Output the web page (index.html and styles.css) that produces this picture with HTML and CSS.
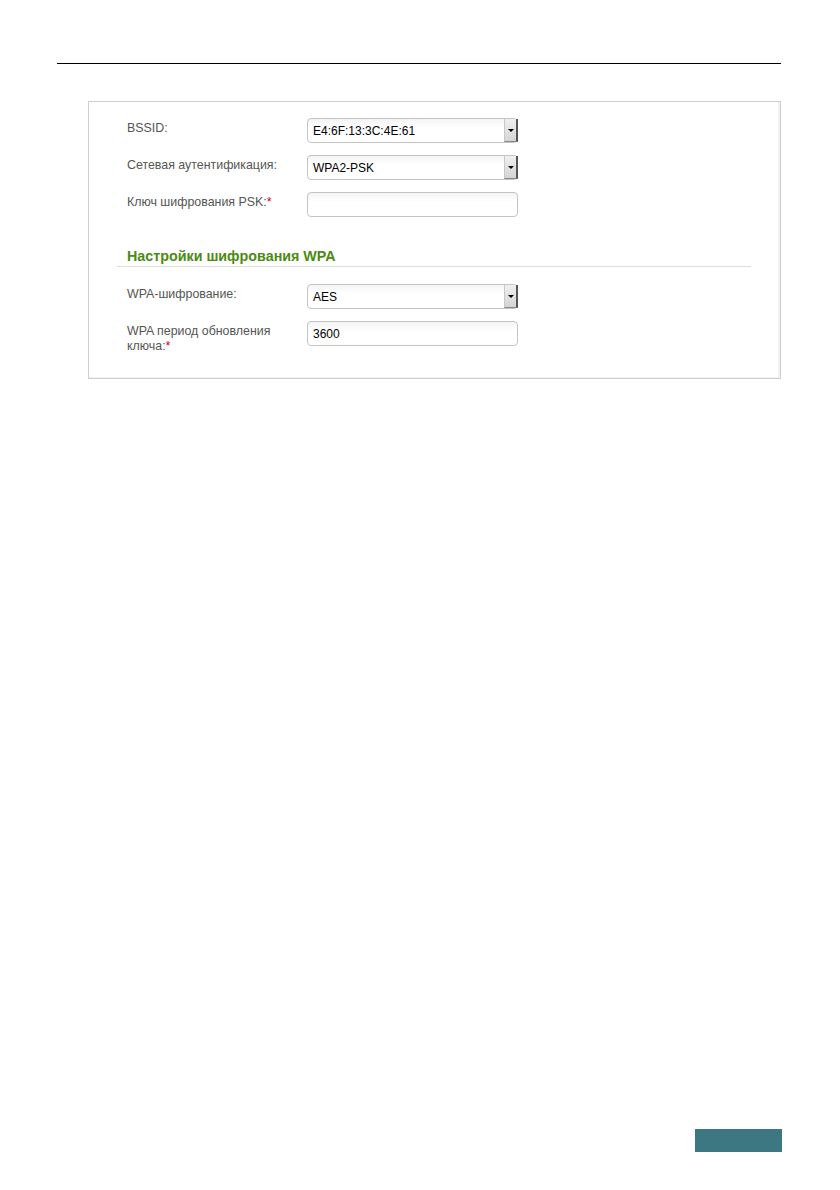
FILE: index.html
```html
<!doctype html>
<html>
	<head>
	    <meta charset="utf-8"/>
	    <title>Wi-Fi</title>
		<link rel="stylesheet" href="styles.css">
	</head>
	<body>
	   <div class="page">
	       <div class="rule"></div>

	       <div class="panel">
	           <div class="row">
	               <div class="label">BSSID:</div>
	               <div class="select"><span class="value">E4:6F:13:3C:4E:61</span><span class="arrow"></span></div>
	           </div>
	           <div class="row">
	               <div class="label">Сетевая аутентификация:</div>
	               <div class="select"><span class="value">WPA2-PSK</span><span class="arrow"></span></div>
	           </div>
	           <div class="row">
	               <div class="label">Ключ шифрования PSK:<span class="req">*</span></div>
	               <div class="input"></div>
	           </div>

	           <h2 class="section">Настройки шифрования WPA</h2>

	           <div class="row">
	               <div class="label">WPA-шифрование:</div>
	               <div class="select"><span class="value">AES</span><span class="arrow"></span></div>
	           </div>
	           <div class="row">
	               <div class="label">WPA период обновления<br/>ключа:<span class="req">*</span></div>
	               <div class="input"><span class="value">3600</span></div>
	           </div>
	       </div>

	       <div class="footer"></div>
	   </div>
	</body>
</html>
```

FILE: styles.css
```css
body{
    margin: 0;
    font-family: "Liberation Sans", Arial, sans-serif;
    font-size: 12.4px;
    background: #fff;
}

.page{
    display: flex;
    flex-direction: column;
    min-height: 1190px;
    box-sizing: border-box;
    padding: 63px 59px 38px 57px;
}
.rule{
    border-top: 1px solid #000;
}

.panel{
    margin: 37px 0 0 31px;
    padding: 16px 29px 24px 28px;
    border: 1px solid #cfcfcf;
    box-shadow: inset -2px -1px 0 #f2f2f2;
}
.row{
    display: flex;
    align-items: flex-start;
    margin-bottom: 12px;
}
.row:last-child{
    margin-bottom: 0;
}
.label{
    width: 170px;
    padding: 3px 10px 0 10px;
    line-height: 15px;
    color: #555;
}
.req{
    color: #d0021b;
}

.select, .input{
    width: 211px;
    height: 25px;
    box-sizing: border-box;
    border: 1px solid #c4c4c4;
    border-radius: 4px;
    background: linear-gradient(#f4f4f4, #fff 40%);
    display: flex;
    align-items: center;
    color: #000;
    font-size: 12px;
}
.value{
    flex: 1;
    padding-left: 5px;
    padding-top: 1px;
}
.arrow{
    width: 14px;
    height: 23px;
    margin-right: -1px;
    box-sizing: border-box;
    background: linear-gradient(#f0f0f0, #d4d4d4);
    border-left: 1px solid #c8c8c8;
    border-right: 2px solid #555;
    border-bottom: 1px solid #888;
    position: relative;
}
.arrow:after{
    content: "";
    position: absolute;
    left: 3px;
    top: 10px;
    border-left: 3px solid transparent;
    border-right: 3px solid transparent;
    border-top: 3px solid #000;
}

.section{
    margin: 31px 0 17px 0;
    padding: 0 0 2px 10px;
    font-size: 14.3px;
    font-weight: bold;
    color: #4c8a12;
    border-bottom: 1px solid #dcdcdc;
    line-height: 16px;
}

.footer{
    margin-top: auto;
    align-self: flex-end;
    width: 87px;
    height: 23px;
    margin-right: -1px;
    background: #3d7781;
}
```
